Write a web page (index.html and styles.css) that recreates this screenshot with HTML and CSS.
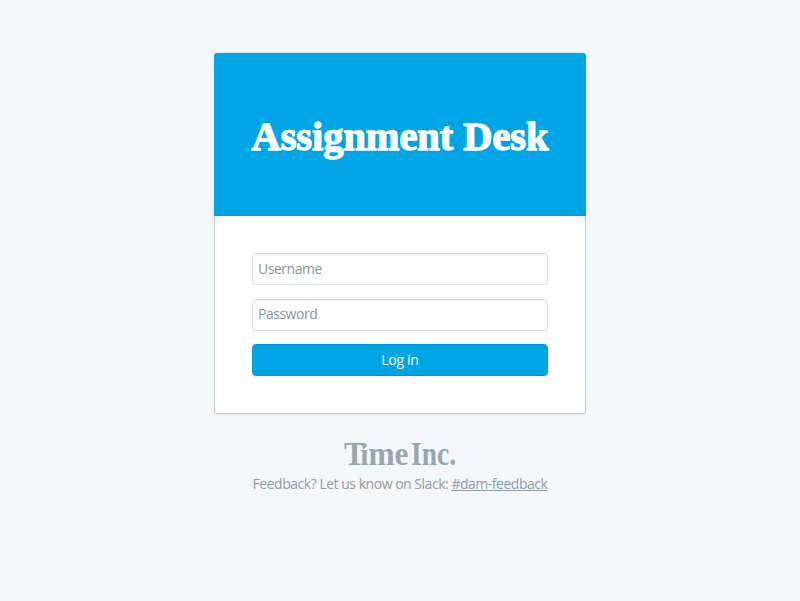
FILE: index.html
```
<!DOCTYPE html>
<html lang="en">
<head>
<meta charset="utf-8">
<title>Assignment Desk</title>
<link rel="stylesheet" href="styles.css">
</head>
<body>
<main class="page">
  <section class="card">
    <header class="card-header">
      <h1 class="title">
        <svg class="title-art" width="300" height="50" viewBox="0 0 300 50">
          <text x="1.5" y="38" textLength="297" lengthAdjust="spacingAndGlyphs">Assignment Desk</text>
        </svg>
      </h1>
    </header>
    <form class="login">
      <input class="field" type="text" placeholder="Username" aria-label="Username">
      <input class="field" type="password" placeholder="Password" aria-label="Password">
      <button class="submit" type="button">Log in</button>
    </form>
  </section>
  <footer class="footer">
    <svg class="logo" width="130" height="40" viewBox="-8 -6 130 40">
      <text x="1" y="24" textLength="64.5" lengthAdjust="spacingAndGlyphs">T<tspan class="logo-i" dx="-5">i</tspan>me</text>
      <text x="68" y="24" textLength="45" lengthAdjust="spacingAndGlyphs">Inc.</text>
    </svg>
    <p class="feedback">Feedback? Let us know on Slack: <a class="channel" href="#">#dam-feedback</a></p>
  </footer>
</main>
</body>
</html>
```
FILE: styles.css
```
* { box-sizing: border-box; }

body {
  margin: 0;
  background: #f4f8fb;
  color: #8f9da5;
  font: 14px/20px "Open Sans", sans-serif;
  letter-spacing: -0.48px;
}

.page {
  display: flex;
  flex-direction: column;
  align-items: center;
  padding-top: 52px;
}

.card {
  width: 372px;
  height: 362px;
  border: 1px solid #bfd0df;
  border-top-color: #d7edf7;
  border-radius: 4px;
  background: #fff;
  box-shadow: 0 1px 2px rgba(60, 90, 110, .12);
}

.card-header {
  display: flex;
  align-items: center;
  justify-content: center;
  height: 163px;
  margin: 0 -1px;
  padding-top: 5px;
  background: #00a5e5;
  border-bottom: 1px solid #0899d5;
  border-radius: 3px 3px 0 0;
}

.title { margin: 0; line-height: 0; }

.title-art text {
  font: bold 39px "Liberation Serif", serif;
  letter-spacing: 0;
  fill: #fff;
  stroke: #fff;
  stroke-width: 1.3px;
}

.login {
  display: flex;
  flex-direction: column;
  gap: 13.5px;
  padding: 37px 37px 0;
}

.field, .submit {
  width: 100%;
  height: 32px;
  margin: 0;
  border-radius: 4px;
  font: 14px/20px "Open Sans", sans-serif;
  letter-spacing: -0.48px;
}

.field {
  padding: 0 5px 2px;
  border: 1px solid #d6dde2;
  background: #fff;
  box-shadow: inset 0 1px 1px rgba(60, 80, 100, .08);
}

.field::placeholder { color: #8796a0; opacity: 1; }

.submit {
  padding: 0;
  border: 1px solid #0895d0;
  background: #00a5e5;
  color: #fff;
  letter-spacing: -0.3px;
}

.footer {
  display: flex;
  flex-direction: column;
  align-items: center;
  padding-top: 21px;
}

.logo text {
  font: bold 33px "Liberation Serif", serif;
  letter-spacing: 0;
  fill: #98a6ae;
}

.logo .logo-i { font-size: 31px; }

.feedback { margin: -1px 0 0; white-space: nowrap; }

.channel { color: inherit; text-decoration: underline; }
```
